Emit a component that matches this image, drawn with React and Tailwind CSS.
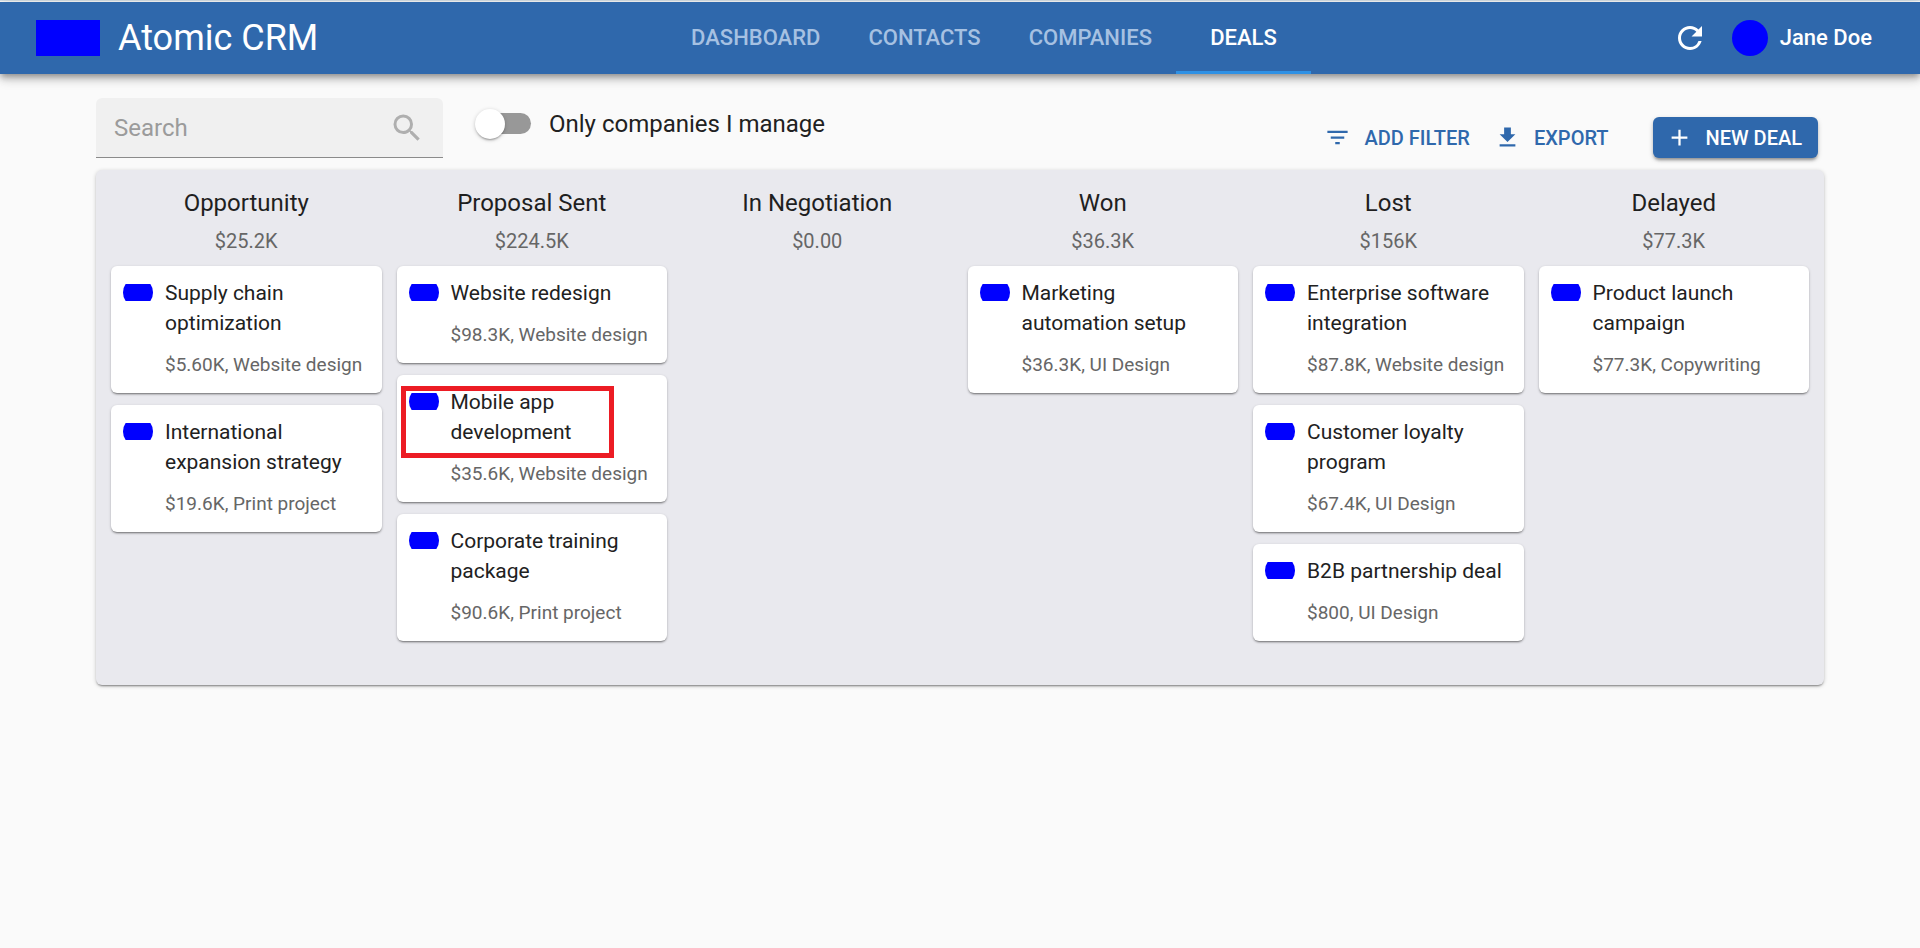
import {
  MdAdd,
  MdFileDownload,
  MdFilterList,
  MdRefresh,
  MdSearch,
} from 'react-icons/md';

const tabs = [
  { label: 'Dashboard', active: false },
  { label: 'Contacts', active: false },
  { label: 'Companies', active: false },
  { label: 'Deals', active: true },
];

const columns = [
  {
    name: 'Opportunity',
    total: '$25.2K',
    deals: [
      { name: 'Supply chain optimization', detail: '$5.60K, Website design' },
      { name: 'International expansion strategy', detail: '$19.6K, Print project' },
    ],
  },
  {
    name: 'Proposal Sent',
    total: '$224.5K',
    deals: [
      { name: 'Website redesign', detail: '$98.3K, Website design' },
      { name: 'Mobile app development', detail: '$35.6K, Website design', marked: true },
      { name: 'Corporate training package', detail: '$90.6K, Print project' },
    ],
  },
  { name: 'In Negotiation', total: '$0.00', deals: [] },
  {
    name: 'Won',
    total: '$36.3K',
    deals: [{ name: 'Marketing automation setup', detail: '$36.3K, UI Design' }],
  },
  {
    name: 'Lost',
    total: '$156K',
    deals: [
      { name: 'Enterprise software integration', detail: '$87.8K, Website design' },
      { name: 'Customer loyalty program', detail: '$67.4K, UI Design' },
      { name: 'B2B partnership deal', detail: '$800, UI Design' },
    ],
  },
  {
    name: 'Delayed',
    total: '$77.3K',
    deals: [{ name: 'Product launch campaign', detail: '$77.3K, Copywriting' }],
  },
];

function Header() {
  return (
    <header className="flex h-[72px] items-center justify-between bg-[#2f68ac] px-9 text-white shadow-[0_3px_6px_-1px_rgba(0,0,0,0.3),0_6px_8px_0_rgba(0,0,0,0.14),0_2px_15px_0_rgba(0,0,0,0.12)]">
      <div className="flex items-center gap-[18px]">
        <div className="h-9 w-16 bg-[#0000ff]" />
        <h1 className="text-[36px] leading-[48px]">Atomic CRM</h1>
      </div>
      <nav className="flex h-full">
        {tabs.map((tab) => (
          <a
            key={tab.label}
            href="#"
            aria-current={tab.active ? 'page' : undefined}
            className={
              tab.active
                ? 'flex min-w-[135px] items-center justify-center border-b-3 border-[#2f91e4] px-6 pt-[3px] text-[22px] font-medium uppercase leading-9'
                : 'flex min-w-[135px] items-center justify-center px-6 text-[22px] font-medium uppercase leading-9 text-[#a6c1e2]'
            }
          >
            {tab.label}
          </a>
        ))}
      </nav>
      <div className="flex items-center">
        <button type="button" aria-label="Refresh" className="p-3">
          <MdRefresh className="size-9" />
        </button>
        <button type="button" className="flex items-center gap-3 px-3 text-[22px] font-medium leading-9">
          <span className="size-9 rounded-full bg-[#0000ff]" />
          Jane Doe
        </button>
      </div>
    </header>
  );
}

function Toolbar() {
  return (
    <div className="flex items-end justify-between">
      <div className="flex items-start gap-8">
        <label className="flex h-[60px] w-[347px] items-center rounded-t-md border-b border-[#8b8b8b] bg-[#f0f0f0] px-[18px]">
          <input
            type="text"
            aria-label="Search"
            placeholder="Search"
            className="min-w-0 flex-1 bg-transparent text-[24px] leading-9 outline-none placeholder:text-[#9b9b9b]"
          />
          <MdSearch className="size-9 shrink-0 text-[#afafaf]" />
        </label>
        <label className="flex h-[51px] cursor-pointer items-center gap-[18px] text-[24px] leading-9">
          <input type="checkbox" className="peer sr-only" />
          <span className="relative flex h-[30px] w-14 items-center justify-end">
            <span className="h-[21px] w-[51px] rounded-full bg-[#989898]" />
            <span className="absolute left-0 top-0 size-[30px] rounded-full bg-white shadow-[0_2px_2px_-1px_rgba(0,0,0,0.3),0_1px_4px_0_rgba(0,0,0,0.2)]" />
          </span>
          Only companies I manage
        </label>
      </div>
      <div className="flex items-center pr-[6px] text-[20px] font-medium leading-[30px] text-[#2f68ac]">
        <button type="button" className="flex items-center gap-[13px] px-3 uppercase">
          <MdFilterList className="size-[27px]" />
          Add filter
        </button>
        <button type="button" className="flex items-center gap-[13px] px-3 uppercase">
          <MdFileDownload className="size-[27px]" />
          Export
        </button>
        <button
          type="button"
          className="ml-8 flex h-[41px] items-center gap-[13px] rounded-md bg-[#2f68ac] pl-[13px] pr-4 uppercase text-white shadow-[0_3px_3px_-1px_rgba(0,0,0,0.3),0_2px_5px_0_rgba(0,0,0,0.2)]"
        >
          <MdAdd className="size-[27px]" />
          New deal
        </button>
      </div>
    </div>
  );
}

function DealCard({ deal }) {
  return (
    <article className="relative flex gap-3 rounded-md bg-white px-3 pb-[13px] pt-3 shadow-[0_2px_2px_-1px_rgba(0,0,0,0.4),0_1px_3px_0_rgba(0,0,0,0.22)]">
      <svg viewBox="0 0 30 17" className="mt-[6px] h-[17px] w-[30px] shrink-0" aria-hidden="true">
        <circle cx="15" cy="8.5" r="15" fill="#0000ff" />
      </svg>
      <div className="min-w-0 flex-1">
        <h3 className="mb-3 pr-1 text-[21px] leading-[30px] text-[#212121]">{deal.name}</h3>
        <p className="whitespace-nowrap text-[19px] leading-[30px] text-[#666666]">{deal.detail}</p>
      </div>
      {deal.marked && (
        <div className="absolute left-1 top-[11px] h-[72px] w-[213px] border-5 border-[#ec1c24]" />
      )}
    </article>
  );
}

function Board() {
  return (
    <main className="mt-3 grid grid-cols-6 gap-[15px] rounded-md bg-[#e9e9ee] px-[15px] pb-11 pt-[15px] shadow-[0_2px_2px_-1px_rgba(0,0,0,0.4),0_1px_4px_0_rgba(0,0,0,0.2)]">
      {columns.map((column) => (
        <section key={column.name}>
          <h2 className="text-center text-[24px] leading-9 text-[#1f1f1f]">{column.name}</h2>
          <p className="mb-[10px] pt-[5px] text-center text-[20px] leading-[30px] text-[#666666]">
            {column.total}
          </p>
          <div className="flex flex-col gap-3">
            {column.deals.map((deal) => (
              <DealCard key={deal.name} deal={deal} />
            ))}
          </div>
        </section>
      ))}
    </main>
  );
}

export default function App() {
  return (
    <div className="min-h-screen border-t border-[#d5dfe6] bg-[#fafafa] pt-px font-['Roboto',sans-serif] text-[#212121]">
      <Header />
      <div className="px-24 pt-6">
        <Toolbar />
        <Board />
      </div>
    </div>
  );
}
